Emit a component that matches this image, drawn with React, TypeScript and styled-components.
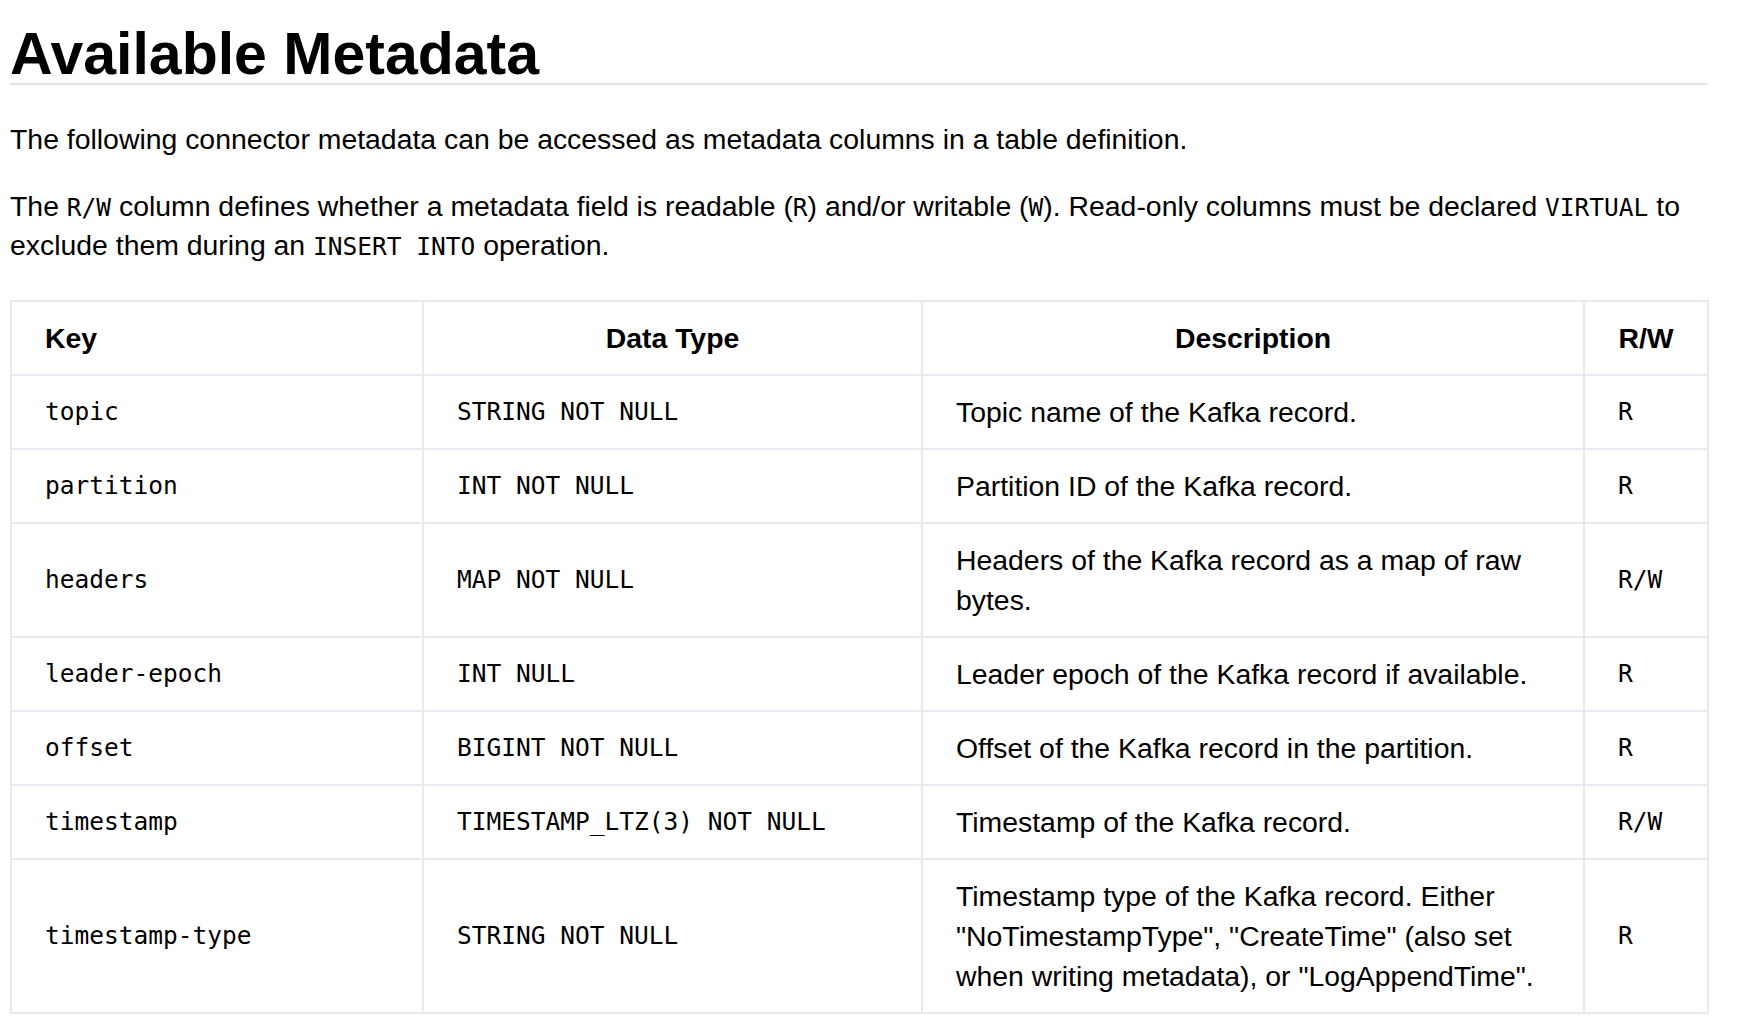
import styled, { createGlobalStyle } from "styled-components";

const GlobalStyle = createGlobalStyle`
  html, body {
    margin: 0;
    padding: 0;
    background: #ffffff;
  }
  body {
    font-family: "Liberation Sans", Arial, Helvetica, sans-serif;
    color: #000000;
  }
`;

type Row = {
  name: string;
  dataType: string;
  description: string;
  access: string;
};

const rows: Row[] = [
  { name: "topic", dataType: "STRING NOT NULL", description: "Topic name of the Kafka record.", access: "R" },
  { name: "partition", dataType: "INT NOT NULL", description: "Partition ID of the Kafka record.", access: "R" },
  {
    name: "headers",
    dataType: "MAP NOT NULL",
    description: "Headers of the Kafka record as a map of raw bytes.",
    access: "R/W",
  },
  {
    name: "leader-epoch",
    dataType: "INT NULL",
    description: "Leader epoch of the Kafka record if available.",
    access: "R",
  },
  {
    name: "offset",
    dataType: "BIGINT NOT NULL",
    description: "Offset of the Kafka record in the partition.",
    access: "R",
  },
  {
    name: "timestamp",
    dataType: "TIMESTAMP_LTZ(3) NOT NULL",
    description: "Timestamp of the Kafka record.",
    access: "R/W",
  },
  {
    name: "timestamp-type",
    dataType: "STRING NOT NULL",
    description:
      'Timestamp type of the Kafka record. Either "NoTimestampType", "CreateTime" (also set when writing metadata), or "LogAppendTime".',
    access: "R",
  },
];

export default function App() {
  return (
    <>
      <GlobalStyle />
      <SPage>
        <STitle>Available Metadata</STitle>
        <SParagraph>
          The following connector metadata can be accessed as metadata columns in a table definition.
        </SParagraph>
        <SParagraph>
          The <SCode>R/W</SCode> column defines whether a metadata field is readable (<SCode>R</SCode>) and/or
          writable (<SCode>W</SCode>). Read-only columns must be declared <SCode>VIRTUAL</SCode> to exclude them
          during an <SCode>INSERT INTO</SCode> operation.
        </SParagraph>

        <STable>
          <colgroup>
            <col style={{ width: 412 }} />
            <col style={{ width: 499 }} />
            <col style={{ width: 662 }} />
            <col style={{ width: 124 }} />
          </colgroup>
          <thead>
            <tr>
              <SHead $align="left">Key</SHead>
              <SHead $align="center">Data Type</SHead>
              <SHead $align="center">Description</SHead>
              <SHead $align="center">R/W</SHead>
            </tr>
          </thead>
          <tbody>
            {rows.map((row) => (
              <tr key={row.name}>
                <SCell $mono>{row.name}</SCell>
                <SCell $mono>{row.dataType}</SCell>
                <SCell>{row.description}</SCell>
                <SCell $mono>{row.access}</SCell>
              </tr>
            ))}
          </tbody>
        </STable>
      </SPage>
    </>
  );
}

const MONO = '"DejaVu Sans Mono", "Liberation Mono", monospace';

const SPage = styled.div`
  width: 1698px;
  padding: 0 0 18px 10px;
`;

const STitle = styled.h2`
  margin: 26px 0 35px;
  padding: 0;
  font-size: 59px;
  line-height: 57px;
  font-weight: 700;
  border-bottom: 2px solid #e4e4e4;
`;

const SParagraph = styled.p`
  margin: 0 0 28px;
  font-size: 28.4px;
  line-height: 39px;
`;

const SCode = styled.code`
  font-family: ${MONO};
  font-size: 24.5px;
  line-height: 1;
`;

const STable = styled.table`
  width: 1697px;
  margin-top: 35px;
  border-collapse: collapse;
  table-layout: fixed;
  font-size: 28.4px;
  line-height: 40px;
`;

const SHead = styled.th<{ $align: "left" | "center" }>`
  padding: 16px 33px;
  border: 2px solid #e9e9ef;
  text-align: ${(p) => p.$align};
  font-weight: 700;
  vertical-align: middle;
`;

const SCell = styled.td<{ $mono?: boolean }>`
  padding: 16px 33px;
  border: 2px solid #e9e9ef;
  text-align: left;
  vertical-align: middle;
  font-family: ${(p) => (p.$mono ? MONO : '"Liberation Sans", Arial, sans-serif')};
  font-size: ${(p) => (p.$mono ? "24.5px" : "28.4px")};
`;
